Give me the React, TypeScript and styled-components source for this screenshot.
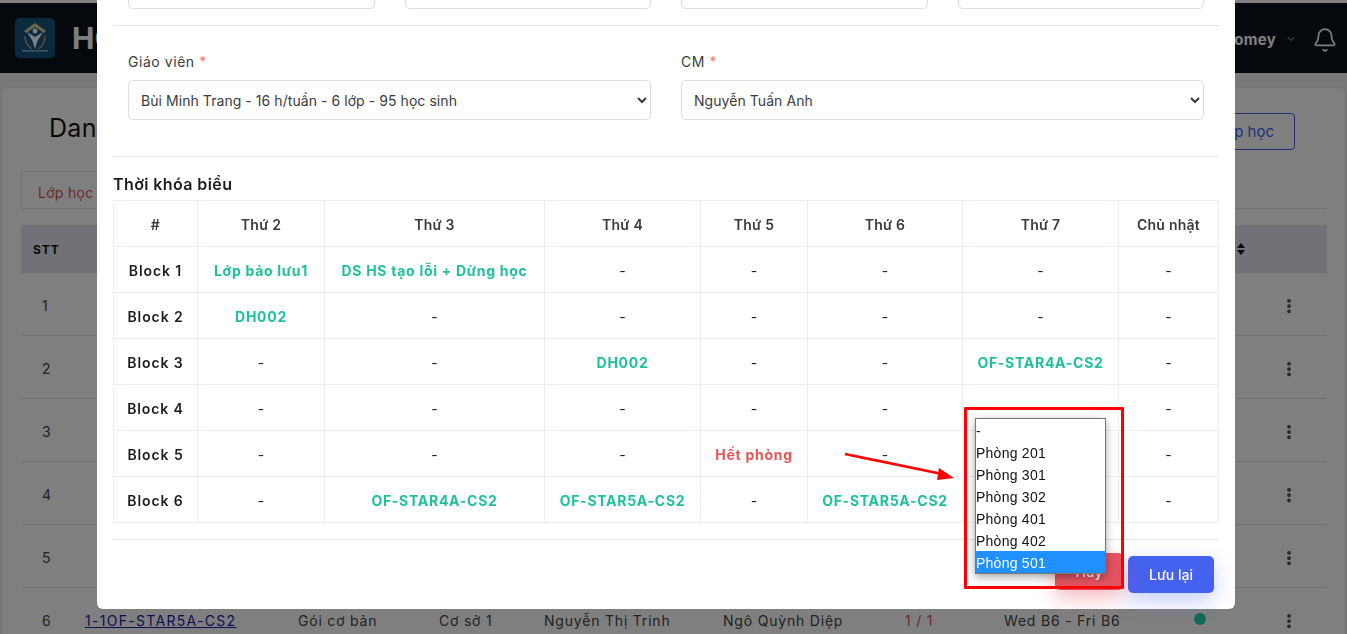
import React from 'react';
import styled, { createGlobalStyle } from 'styled-components';
import { Bell, ChevronDown, EllipsisVertical } from 'lucide-react';

const GlobalStyle = createGlobalStyle`
  html, body {
    margin: 0;
    padding: 0;
    height: 634px;
    overflow: hidden;
    background: #fff;
    font-family: Inter, "Liberation Sans", sans-serif;
  }
  * { box-sizing: border-box; }
`;

const days = ['Thứ 2', 'Thứ 3', 'Thứ 4', 'Thứ 5', 'Thứ 6', 'Thứ 7', 'Chủ nhật'];
const colWidths = [84, 127, 220, 156, 107, 155, 156, 100];

type Slot = { text: string; tone?: 'ok' | 'full' };
const d: Slot = { text: '-' };
const open: Slot = { text: '' }; // the open room select sits over these cells
const ok = (text: string): Slot => ({ text, tone: 'ok' });

const timetable: { block: string; slots: Slot[] }[] = [
  { block: 'Block 1', slots: [ok('Lớp bảo lưu1'), ok('DS HS tạo lỗi + Dừng học'), d, d, d, d, d] },
  { block: 'Block 2', slots: [ok('DH002'), d, d, d, d, d, d] },
  { block: 'Block 3', slots: [d, d, ok('DH002'), d, d, ok('OF-STAR4A-CS2'), d] },
  { block: 'Block 4', slots: [d, d, d, d, d, open, d] },
  { block: 'Block 5', slots: [d, d, d, { text: 'Hết phòng', tone: 'full' }, d, open, d] },
  { block: 'Block 6', slots: [d, ok('OF-STAR4A-CS2'), ok('OF-STAR5A-CS2'), d, ok('OF-STAR5A-CS2'), open, d] },
];

const rooms = ['-', 'Phòng 201', 'Phòng 301', 'Phòng 302', 'Phòng 401', 'Phòng 402', 'Phòng 501'];
const rowNumbers = [1, 2, 3, 4, 5];

const Page = styled.div`
  height: 634px;
  overflow: hidden;
  background: #f1f1f6;
  border-top: 3px solid #fff;
`;

const Header = styled.header`
  height: 70px;
  background: #0b121c;
  display: flex;
  align-items: center;
  padding: 0 9px 0 15px;
`;

const Brand = styled.div`
  font-size: 30px;
  font-weight: 700;
  color: #fff;
  margin-left: 17px;
  flex: 1;
`;

const UserName = styled.span`
  font-size: 15px;
  font-weight: 700;
  letter-spacing: 0.3px;
  color: #fff;
  margin: 3px 9px 0 0;
`;

const UserChevron = styled(ChevronDown)`
  color: #ccc;
  margin: 1px 15px 0 0;
`;

const BellIcon = styled(Bell)`
  color: #fff;
  margin-top: 3px;
`;

const Card = styled.section`
  margin: 14px 1px 0;
  background: #fff;
  border: 1px solid #e9e9ef;
  border-radius: 6px;
  padding: 25px 18px 0 19px;
  height: 560px;
`;

const CardTop = styled.div`
  display: flex;
  justify-content: space-between;
  align-items: flex-start;
  padding: 0 32px 0 28px;
  height: 37px;
`;

const CardTitle = styled.h1`
  margin: 0;
  font-size: 25px;
  line-height: 30px;
  font-weight: 400;
  letter-spacing: 0.3px;
  color: #111;
`;

const AddButton = styled.button`
  height: 37px;
  width: 170px;
  background: #fff;
  border: 1px solid #4361ee;
  border-radius: 4px;
  color: #4361ee;
  font: 400 15px Inter, sans-serif;
  padding: 0 20px;
  text-align: right;
`;

const Tabs = styled.div`
  margin-top: 21px;
  height: 38px;
  border-bottom: 1px solid #e3e3ea;
`;

const Tab = styled.div`
  width: 130px;
  height: 38px;
  border: 1px solid #e3e3ea;
  border-bottom: 0;
  padding: 12px 16px;
  color: #d9534f;
  font-size: 14px;
  letter-spacing: 0.3px;
`;

const Grid = styled.div`
  margin-top: 16px;
  display: grid;
  grid-template-columns: 64px 213px 141px 105px 179px 182px 99px 188px 88px 48px;
  align-items: center;
`;

const HeadRow = styled(Grid)`
  height: 48px;
  background: #e2e4ee;
  border-bottom: 1px solid #d8d8e0;
  padding: 1px 0 0 12px;
  grid-template-columns: 1204px 20px;
  font-size: 12px;
  font-weight: 700;
  letter-spacing: 1px;
  color: #111;
`;

const Row = styled(Grid)`
  margin-top: 0;
  height: 63px;
  border-bottom: 1px solid #e3e3ea;
  padding-top: 3px;
  font-size: 14px;
  letter-spacing: 0.8px;
  color: #444;
`;

const RowNumber = styled.span`
  padding-left: 21px;
`;

const ClassLink = styled.a`
  color: #1a1aa8;
  text-decoration: underline;
  letter-spacing: 1.3px;
`;

const Quota = styled.span`
  color: #d9534f;
`;

const StatusDot = styled.span`
  width: 12px;
  height: 12px;
  border-radius: 50%;
  background: #1cd6ae;
  margin: -3px 0 0 2px;
`;

const Overlay = styled.div`
  position: fixed;
  inset: 0;
  background: rgba(0, 0, 0, 0.5);
`;

const Modal = styled.div`
  position: fixed;
  top: 0;
  left: 97px;
  width: 1138px;
  height: 609px;
  background: #fff;
  border-radius: 0 0 6px 6px;
  padding: 0 16px;
`;

const StubRow = styled.div`
  display: grid;
  grid-template-columns: repeat(4, 1fr);
  gap: 30px;
  padding: 0 15px;
  height: 9px;
`;

const StubInput = styled.div`
  border: 1px solid #dcdce4;
  border-top: 0;
  border-radius: 0 0 5px 5px;
`;

const Divider = styled.hr<{ $after: number }>`
  border: 0;
  border-top: 1px solid #e4e4ec;
  margin: ${(p) => p.$after}px 0 0;
`;

const FormRow = styled.div`
  display: grid;
  grid-template-columns: 1fr 1fr;
  gap: 30px;
  padding: 0 15px;
  margin-top: 26px;
`;

const Field = styled.div`
  display: flex;
  flex-direction: column;
  gap: 9px;
`;

const Label = styled.label`
  font-size: 14px;
  line-height: 19px;
  letter-spacing: 0.55px;
  color: #3b3b40;
`;

const Required = styled.span`
  color: #f0787a;
`;

const Select = styled.select`
  height: 40px;
  width: 100%;
  background: #fff;
  border: 1px solid #dcdce4;
  border-radius: 5px;
  padding: 0 8px;
  font: 400 14px Inter, sans-serif;
  letter-spacing: 0.06px;
  color: #3b3b40;
`;

const SectionTitle = styled.h2`
  margin: 18px 0 6px;
  font-size: 16px;
  line-height: 19px;
  font-weight: 600;
  letter-spacing: 0.4px;
  color: #1d1d20;
`;

const Timetable = styled.table`
  width: 1105px;
  table-layout: fixed;
  border-collapse: collapse;
  font-size: 14px;
  letter-spacing: 0.5px;
`;

const Cell = styled.td`
  height: 46px;
  border: 1px solid #ebebf3;
  text-align: center;
  padding: 2px 0 0;
  color: #222;
`;

const HeadCell = styled(Cell).attrs({ as: 'th' })`
  font-weight: 600;
  letter-spacing: 0.25px;
  color: #3a3a40;
`;

const BlockCell = styled(Cell)`
  font-weight: 600;
  letter-spacing: 0.9px;
  color: #1c1c20;
`;

const SlotText = styled.span<{ $tone?: 'ok' | 'full' }>`
  font-weight: ${(p) => (p.$tone ? 700 : 400)};
  letter-spacing: ${(p) => (p.$tone ? '0.72px' : '0')};
  color: ${(p) => (p.$tone === 'ok' ? '#1fc19b' : p.$tone === 'full' ? '#ea5455' : '#222')};
`;

const Footer = styled.div`
  display: flex;
  justify-content: flex-end;
  align-items: flex-start;
  gap: 5px;
  padding: 16px 5px 0 0;
`;

const ActionButton = styled.button<{ $variant: 'cancel' | 'save' }>`
  height: 37px;
  border: 0;
  border-radius: 5px;
  color: #fff;
  font: 500 14px Inter, sans-serif;
  width: ${(p) => (p.$variant === 'cancel' ? '68px' : '86px')};
  background: ${(p) => (p.$variant === 'cancel' ? '#e25261' : '#4561f0')};
  box-shadow: 0 8px 20px
    ${(p) => (p.$variant === 'cancel' ? 'rgba(226, 82, 97, 0.4)' : 'rgba(69, 97, 240, 0.3)')};
  transform: ${(p) => (p.$variant === 'cancel' ? 'translateY(-3px)' : 'none')};
`;

const RoomList = styled.ul`
  position: fixed;
  top: 418px;
  left: 975px;
  width: 131px;
  height: 156px;
  margin: 0;
  padding: 0;
  list-style: none;
  background: #fff;
  border: 1px solid #767676;
  box-shadow: 0 3px 8px rgba(0, 0, 0, 0.35);
  font-family: "Liberation Sans", Arial, sans-serif;
  font-size: 14px;
  letter-spacing: 0.25px;
`;

const RoomItem = styled.li<{ $active?: boolean }>`
  height: 22px;
  line-height: 24px;
  color: ${(p) => (p.$active ? '#fff' : '#111')};
  background: ${(p) => (p.$active ? '#1e90ff' : 'transparent')};
`;

const Highlight = styled.div`
  position: fixed;
  top: 407px;
  left: 964px;
  width: 160px;
  height: 182px;
  border: 3px solid #ff0000;
  border-radius: 1px;
`;

const Arrow = styled.svg`
  position: fixed;
  top: 445px;
  left: 840px;
`;

const LogoMark = () => (
  <svg width="40" height="40" viewBox="0 0 40 40">
    <rect width="40" height="40" rx="5" fill="#17527f" />
    <path d="M20 5 L31 13 L29 15 L20 9 L11 15 L9 13 Z" fill="#d8c99a" />
    <circle cx="20" cy="13" r="2.4" fill="#fff" />
    <path d="M12 14 L20 19 L28 14 L22.5 23 L20 31 L17.5 23 Z" fill="#fff" />
    <path d="M10 18 Q10 27 17 31 M30 18 Q30 27 23 31" stroke="#b7a873" strokeWidth="1.4" fill="none" />
    <rect x="7" y="32.4" width="26" height="1" fill="#cfd8e0" />
  </svg>
);

const SortCarets = () => (
  <svg width="8" height="12" viewBox="0 0 8 12">
    <path d="M4 0 L8 5 L0 5 Z M4 12 L0 7 L8 7 Z" fill="#111" />
  </svg>
);

const App: React.FC = () => (
  <>
    <GlobalStyle />
    <Page>
      <Header>
        <LogoMark />
        <Brand>HOMEY</Brand>
        <UserName>Homey</UserName>
        <UserChevron size={12} />
        <BellIcon size={26} strokeWidth={1.5} />
      </Header>
      <Card>
        <CardTop>
          <CardTitle>Danh sách lớp học</CardTitle>
          <AddButton>Thêm lớp học</AddButton>
        </CardTop>
        <Tabs>
          <Tab>Lớp học</Tab>
        </Tabs>
        <HeadRow>
          <span>STT</span>
          <SortCarets />
        </HeadRow>
        {rowNumbers.map((n) => (
          <Row key={n}>
            <RowNumber>{n}</RowNumber>
            <span />
            <span />
            <span />
            <span />
            <span />
            <span />
            <span />
            <span />
            <EllipsisVertical size={18} strokeWidth={3} />
          </Row>
        ))}
        <Row>
          <RowNumber>6</RowNumber>
          <ClassLink>1-1OF-STAR5A-CS2</ClassLink>
          <span>Gói cơ bản</span>
          <span>Cơ sở 1</span>
          <span>Nguyễn Thị Trinh</span>
          <span>Ngô Quỳnh Diệp</span>
          <Quota>1 / 1</Quota>
          <span>Wed B6 - Fri B6</span>
          <StatusDot />
          <EllipsisVertical size={18} strokeWidth={3} />
        </Row>
      </Card>
    </Page>
    <Overlay />
    <Modal>
      <StubRow>
        <StubInput />
        <StubInput />
        <StubInput />
        <StubInput />
      </StubRow>
      <Divider $after={16} />
      <FormRow>
        <Field>
          <Label>
            Giáo viên <Required>*</Required>
          </Label>
          <Select defaultValue="a">
            <option value="a">Bùi Minh Trang - 16 h/tuần - 6 lớp - 95 học sinh</option>
          </Select>
        </Field>
        <Field>
          <Label>
            CM <Required>*</Required>
          </Label>
          <Select defaultValue="a">
            <option value="a">Nguyễn Tuấn Anh</option>
          </Select>
        </Field>
      </FormRow>
      <Divider $after={36} />
      <SectionTitle>Thời khóa biểu</SectionTitle>
      <Timetable>
        <colgroup>
          {colWidths.map((w, i) => (
            <col key={i} width={w} />
          ))}
        </colgroup>
        <thead>
          <tr>
            <HeadCell>#</HeadCell>
            {days.map((day) => (
              <HeadCell key={day}>{day}</HeadCell>
            ))}
          </tr>
        </thead>
        <tbody>
          {timetable.map((row) => (
            <tr key={row.block}>
              <BlockCell>{row.block}</BlockCell>
              {row.slots.map((slot, i) => (
                <Cell key={i}>
                  <SlotText $tone={slot.tone}>{slot.text}</SlotText>
                </Cell>
              ))}
            </tr>
          ))}
        </tbody>
      </Timetable>
      <Divider $after={16} />
      <Footer>
        <ActionButton $variant="cancel">Hủy</ActionButton>
        <ActionButton $variant="save">Lưu lại</ActionButton>
      </Footer>
    </Modal>
    <Highlight />
    <RoomList>
      {rooms.map((room) => (
        <RoomItem key={room} $active={room === 'Phòng 501'}>
          {room}
        </RoomItem>
      ))}
    </RoomList>
    <Arrow width="120" height="40" viewBox="0 0 120 40">
      <path d="M5 9 L102 29" stroke="#ff0000" strokeWidth="2.6" />
      <path d="M114 33 L99 23 L97 35 Z" fill="#ff0000" />
    </Arrow>
  </>
);

export default App;
